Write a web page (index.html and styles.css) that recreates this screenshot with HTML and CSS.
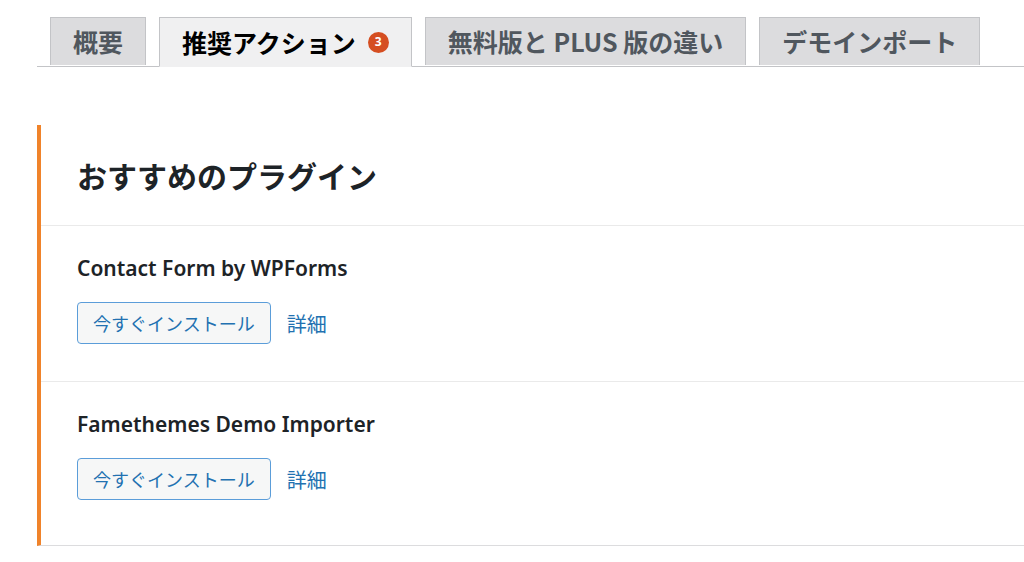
FILE: index.html
```html
<!DOCTYPE html>
<html lang="ja">
<head>
    <title>推奨アクション</title>
    <meta name="viewport" content="width=device-width, initial-scale=1">
    <link rel="stylesheet" href="styles.css">
</head>
<body>
    <div class="wrap">
        <nav class="nav-tabs">
            <a class="nav-tab" href="#">概要</a>
            <a class="nav-tab active" href="#">推奨アクション <span class="badge">3</span></a>
            <a class="nav-tab" href="#">無料版と PLUS 版の違い</a>
            <a class="nav-tab" href="#">デモインポート</a>
        </nav>

        <div class="card">
            <h2 class="card-title">おすすめのプラグイン</h2>

            <div class="plugin">
                <h3>Contact Form by WPForms</h3>
                <div class="actions">
                    <a class="button" href="#">今すぐインストール</a>
                    <a class="details" href="#">詳細</a>
                </div>
            </div>

            <div class="plugin">
                <h3>Famethemes Demo Importer</h3>
                <div class="actions">
                    <a class="button" href="#">今すぐインストール</a>
                    <a class="details" href="#">詳細</a>
                </div>
            </div>
        </div>
    </div>
</body>
</html>
```

FILE: styles.css
```css
body {
    font-family: "Noto Sans CJK JP", "Noto Sans", sans-serif;
    background-color: #fff;
    color: #1d2327;
    margin: 0;
    padding: 0;
}
a {
    text-decoration: none;
}
.wrap {
    padding: 17px 0 0 37px;
}
.nav-tabs {
    display: flex;
    gap: 13px;
    padding-left: 13px;
    border-bottom: 1px solid #c3c4c7;
}
.nav-tab {
    display: flex;
    align-items: center;
    height: 47px;
    padding: 0 22px;
    margin-bottom: -1px;
    border: 1px solid #c3c4c7;
    border-bottom: none;
    background-color: #dcdcde;
    color: #50575e;
    font-size: 25px;
    font-weight: 700;
    line-height: 1;
}
.nav-tab.active {
    background-color: #f0f0f1;
    color: #000;
    height: 48px;
    border-bottom: 1px solid #f0f0f1;
}
.badge {
    display: inline-flex;
    align-items: center;
    justify-content: center;
    width: 21px;
    height: 21px;
    margin-left: 12px;
    border-radius: 50%;
    background-color: #d54e21;
    color: #fff;
    font-family: "Noto Sans", sans-serif;
    font-size: 12px;
    font-weight: 700;
}
.card {
    margin-top: 58px;
    border-left: 4px solid #f0832a;
    border-bottom: 1px solid #dcdcde;
    background-color: #fff;
}
.card-title {
    margin: 0;
    padding: 30px 36px;
    font-size: 30px;
    font-weight: 700;
    line-height: 40px;
    border-bottom: 1px solid #eaeaea;
}
.plugin {
    padding: 28px 36px 37px;
    border-bottom: 1px solid #eaeaea;
}
.plugin:last-child {
    border-bottom: none;
    padding-bottom: 45px;
}
.plugin h3 {
    margin: 0 0 20px;
    font-family: "Noto Sans", "Noto Sans CJK JP", sans-serif;
    font-size: 21px;
    font-weight: 600;
    line-height: 28px;
}
.actions {
    display: flex;
    align-items: center;
    gap: 16px;
}
.button {
    display: inline-flex;
    align-items: center;
    box-sizing: border-box;
    height: 42px;
    padding: 0 15px;
    border: 1px solid #5b9dd9;
    border-radius: 4px;
    background-color: #f6f7f7;
    color: #2271b1;
    font-size: 18px;
}
.details {
    color: #2271b1;
    font-size: 20px;
}
```
